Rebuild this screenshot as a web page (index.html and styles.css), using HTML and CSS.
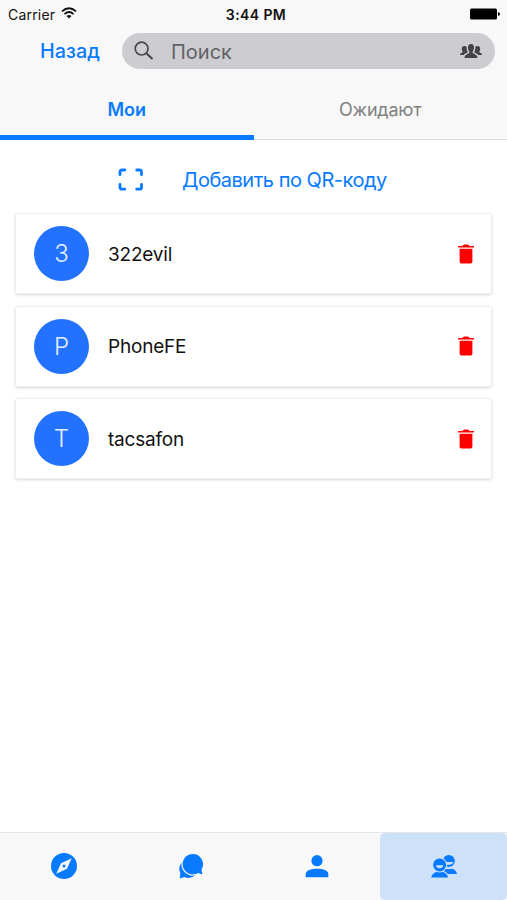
FILE: index.html
```html
<!DOCTYPE html>
<html lang="ru">
<head>
<meta charset="utf-8">
<title>Контакты</title>
<link rel="stylesheet" href="styles.css">
</head>
<body>
<header class="header">
  <div class="status">
    <div class="status-left">
      <span class="carrier">Carrier</span>
      <svg class="wifi" viewBox="0 0 16 12" width="16" height="12"><g fill="none" stroke="#111" stroke-width="1.9"><path d="M1 4.4Q8-1.8 15 4.4"/><path d="M3.5 7.1Q8 3.1 12.5 7.1"/></g><path d="M5.5 8.9Q8 6.9 10.5 8.900L8 11.500Z" fill="#111"/></svg>
    </div>
    <span class="clock">3:44 PM</span>
    <svg class="battery" viewBox="0 0 30 12" width="30" height="12"><rect y=".5" width="27" height="11" rx="1.500"/><path d="M28 4q2 .5 2 2t-2 2z"/></svg>
  </div>
  <div class="toolbar">
    <a class="back">Назад</a>
    <div class="search">
      <svg class="glass" viewBox="0 0 20 20" width="20" height="20" fill="none" stroke="#48484b"><circle cx="7.600" cy="7.600" r="6.400" stroke-width="1.700"/><path d="M12.300 12.300l6.200 5.800" stroke-width="2.100"/></svg>
      <span class="placeholder">Поиск</span>
      <svg class="people" viewBox="0 0 22 15" width="22" height="15" fill="#444447"><path d="M11 0c2 0 3.200 1.500 3 3.800-.1 1.700-.7 2.800-1.300 3.600-.3 1 .1 1.800 1.300 2.300 2 .8 3.300 1.600 3.500 4.300h-13c.2-2.700 1.500-3.500 3.500-4.300 1.200-.5 1.600-1.300 1.300-2.300-.6-.8-1.200-1.900-1.300-3.600C7.800 1.500 9 0 11 0Z"/><path d="M4.500 2.100c1.100 0 1.900.4 2.200 1.100-.2 2.100.3 3.600 1.200 4.900-.4 1-2.900 1.200-4 2.900H0c.1-2 1.600-1.900 2.600-2.700C3 7.700 2 7 1.800 5.200 1.600 3.300 2.800 2.100 4.500 2.100Z"/><path d="M17.500 2.100c-1.100 0-1.900.4-2.200 1.100.2 2.100-.3 3.600-1.200 4.900.4 1 2.900 1.200 4 2.900H22c-.1-2-1.600-1.900-2.600-2.700-.4-.6.600-1.300.8-3.100.2-1.900-1-3.100-2.700-3.100Z"/></svg>
    </div>
  </div>
  <nav class="tabs">
    <a class="tab tab-active"><span>Мои</span></a>
    <a class="tab"><span class="tab-wait">Ожидают</span></a>
  </nav>
</header>
<main class="content">
  <a class="add">
    <svg viewBox="0 0 26 24" width="26" height="24" fill="none" stroke="#087aff" stroke-width="2.800" stroke-linecap="round"><path d="M2 6.700V4q0-2 2-2H6.800M18.700 2H21.500q2 0 2 2v2.700M23.500 16.500v2.700q0 2-2 2H18.700M6.800 21.200H4q-2 0-2-2v-2.700"/></svg>
    <span class="add-label">Добавить по QR-коду</span>
  </a>
  <ul class="list">
    <li class="card">
      <span class="avatar">3</span><span class="name">322evil</span>
      <svg class="trash" viewBox="0 0 16 20" width="16" height="20" fill="#fd0000"><path d="M0 2.100h4.200Q5.200.5 6.500.5h3q1.300 0 2.300 1.600H16v1.500H0ZM1.600 4.700h12.800v13q0 1.800-1.800 1.800H3.400q-1.800 0-1.800-1.800Z"/></svg>
    </li>
    <li class="card">
      <span class="avatar">P</span><span class="name">PhoneFE</span>
      <svg class="trash" viewBox="0 0 16 20" width="16" height="20" fill="#fd0000"><path d="M0 2.100h4.200Q5.200.5 6.500.5h3q1.300 0 2.300 1.600H16v1.500H0ZM1.600 4.700h12.800v13q0 1.800-1.800 1.800H3.400q-1.800 0-1.800-1.800Z"/></svg>
    </li>
    <li class="card">
      <span class="avatar">T</span><span class="name">tacsafon</span>
      <svg class="trash" viewBox="0 0 16 20" width="16" height="20" fill="#fd0000"><path d="M0 2.100h4.200Q5.200.5 6.500.5h3q1.300 0 2.300 1.600H16v1.500H0ZM1.600 4.700h12.800v13q0 1.800-1.800 1.800H3.400q-1.800 0-1.800-1.800Z"/></svg>
    </li>
  </ul>
</main>
<nav class="bottom">
  <a class="item"><svg viewBox="0 0 26 26" width="26" height="26"><circle cx="13" cy="13" r="13" fill="#087aff"/><path d="M20.700 5.300L16 15.700 5.300 20.700 10 10.200Z" fill="#f8f8f8"/><circle cx="13" cy="13" r="1.500" fill="#087aff"/></svg></a>
  <a class="item"><svg viewBox="0 0 26 26" width="26" height="26" fill="#087aff"><path d="M8.500 6.800A9.300 9.300 0 0 0 2.300 20.200L1.800 24.500Q1.800 25.600 2.700 25.300L6.300 24.100Q13 26.600 18 21.800Z"/><path d="M14.800 1a10.200 10.200 0 0 1 8.700 15.500l.8 4.100q0 .8-.7.600l-3.500-1.300A10.200 10.200 0 1 1 14.800 1Z" stroke="#f8f8f8" stroke-width="2.400" paint-order="stroke"/></svg></a>
  <a class="item"><svg viewBox="0 0 24 26" width="24" height="26" fill="#087aff"><circle cx="12" cy="7.700" r="5.600"/><path d="M.7 24.300V21.200C.7 17.500 6 15.800 12 15.800s11.300 1.700 11.300 5.400v3.100Z"/></svg></a>
  <a class="item item-active"><svg viewBox="0 0 26 26" width="26" height="26"><g fill="#087aff"><circle cx="17.800" cy="8" r="6"/><path d="M12 20.900c.2-3.500 2.800-4.900 3.800-5.300h5c2.800.8 4.700 2.700 5.200 5.300Z"/></g><path d="M15 9h7.500q-1 2.800-3.800 2.800H15Z" fill="#cde1f8"/><path d="M14.500 15.200q4 1.300 7.500-.3" fill="none" stroke="#cde1f8"/><g fill="#087aff" stroke="#cde1f8" stroke-width="2" paint-order="stroke"><path d="M.2 24.400c.4-3 2.700-4.800 5-5.500h6.900c2.300.7 4.500 2.500 4.900 5.500Z"/><circle cx="8.600" cy="11.900" r="6.500"/></g><path d="M5 12.300h7.300q-.5 3-3.700 3T5 12.300Z" fill="#cde1f8"/></svg></a>
</nav>
</body>
</html>
```
FILE: styles.css
```css
* { box-sizing: border-box; }
body {
  margin: 0;
  height: 900px;
  display: flex;
  flex-direction: column;
  background: #fff;
  color: #111;
  font-family: Inter, Roboto, "Liberation Sans", sans-serif;
  overflow: hidden;
}
svg { display: block; flex: none; }
span, .back { white-space: nowrap; }
.header {
  height: 140px;
  background: #f8f8f8;
  border-bottom: 1px solid #dedee0;
}
.status {
  height: 28px;
  display: grid;
  grid-template-columns: 1fr auto 1fr;
  align-items: center;
  padding: 0 7px 0 8px;
}
.status-left { display: flex; align-items: center; gap: 6px; }
.carrier { font-size: 14px; letter-spacing: 0.2px; }
.wifi { margin-top: -3px; }
.clock { font-size: 14px; font-weight: 600; letter-spacing: 0.4px; padding-left: 4px; }
.battery { justify-self: end; margin-top: -1px; }
.toolbar {
  height: 52px;
  display: flex;
  padding: 5px 12px 0 40px;
}
.back {
  width: 82px;
  font-size: 19.8px;
  line-height: 37px;
  font-weight: 500;
  color: #087aff;
}
.search {
  flex: 1;
  height: 36px;
  border-radius: 18px;
  background: #cdcdd1;
  display: flex;
  align-items: center;
  padding: 0 13px 0 12px;
}
.placeholder {
  flex: 1;
  margin-left: 17px;
  padding-top: 1px;
  font-size: 20px;
  color: #626266;
}
.tabs { display: flex; height: 60px; }
.tab {
  flex: 1;
  display: flex;
  align-items: center;
  justify-content: center;
  border-bottom: 5px solid transparent;
  padding-top: 4px;
  font-size: 18px;
  color: #808080;
}
.tab-wait { letter-spacing: -0.2px; }
.tab-active {
  border-color: #087aff;
  color: #087aff;
  font-weight: 600;
}
.content { flex: 1; padding: 0 15px; }
.add {
  height: 73px;
  display: flex;
  align-items: center;
  gap: 38px;
  padding: 6px 0 0 103px;
  color: #087aff;
}
.add-label { font-size: 20px; letter-spacing: -0.48px; }
.list {
  list-style: none;
  margin: 0;
  padding: 0;
  display: flex;
  flex-direction: column;
  gap: 11.5px;
}
.card {
  height: 81px;
  display: flex;
  align-items: center;
  padding: 0 17px 0 18px;
  border: 1px solid #efefef;
  border-radius: 3px;
  box-shadow: 0 1px 3px rgba(0, 0, 0, 0.16);
}
.avatar {
  width: 55px;
  height: 55px;
  border-radius: 50%;
  background: #2272ff;
  color: #e6efff;
  font-size: 24px;
  font-weight: 300;
  line-height: 55px;
  text-align: center;
}
.name { flex: 1; margin-left: 19px; padding-top: 1px; font-size: 19px; letter-spacing: -0.2px; }
.bottom {
  height: 68px;
  display: flex;
  background: #f8f8f8;
  border-top: 1px solid #e6e6e6;
}
.item {
  flex: 1;
  display: flex;
  align-items: center;
  justify-content: center;
  padding: 0 0 1px 1px;
}
.item-active { background: #cde1f8; border-radius: 5px; }
```
